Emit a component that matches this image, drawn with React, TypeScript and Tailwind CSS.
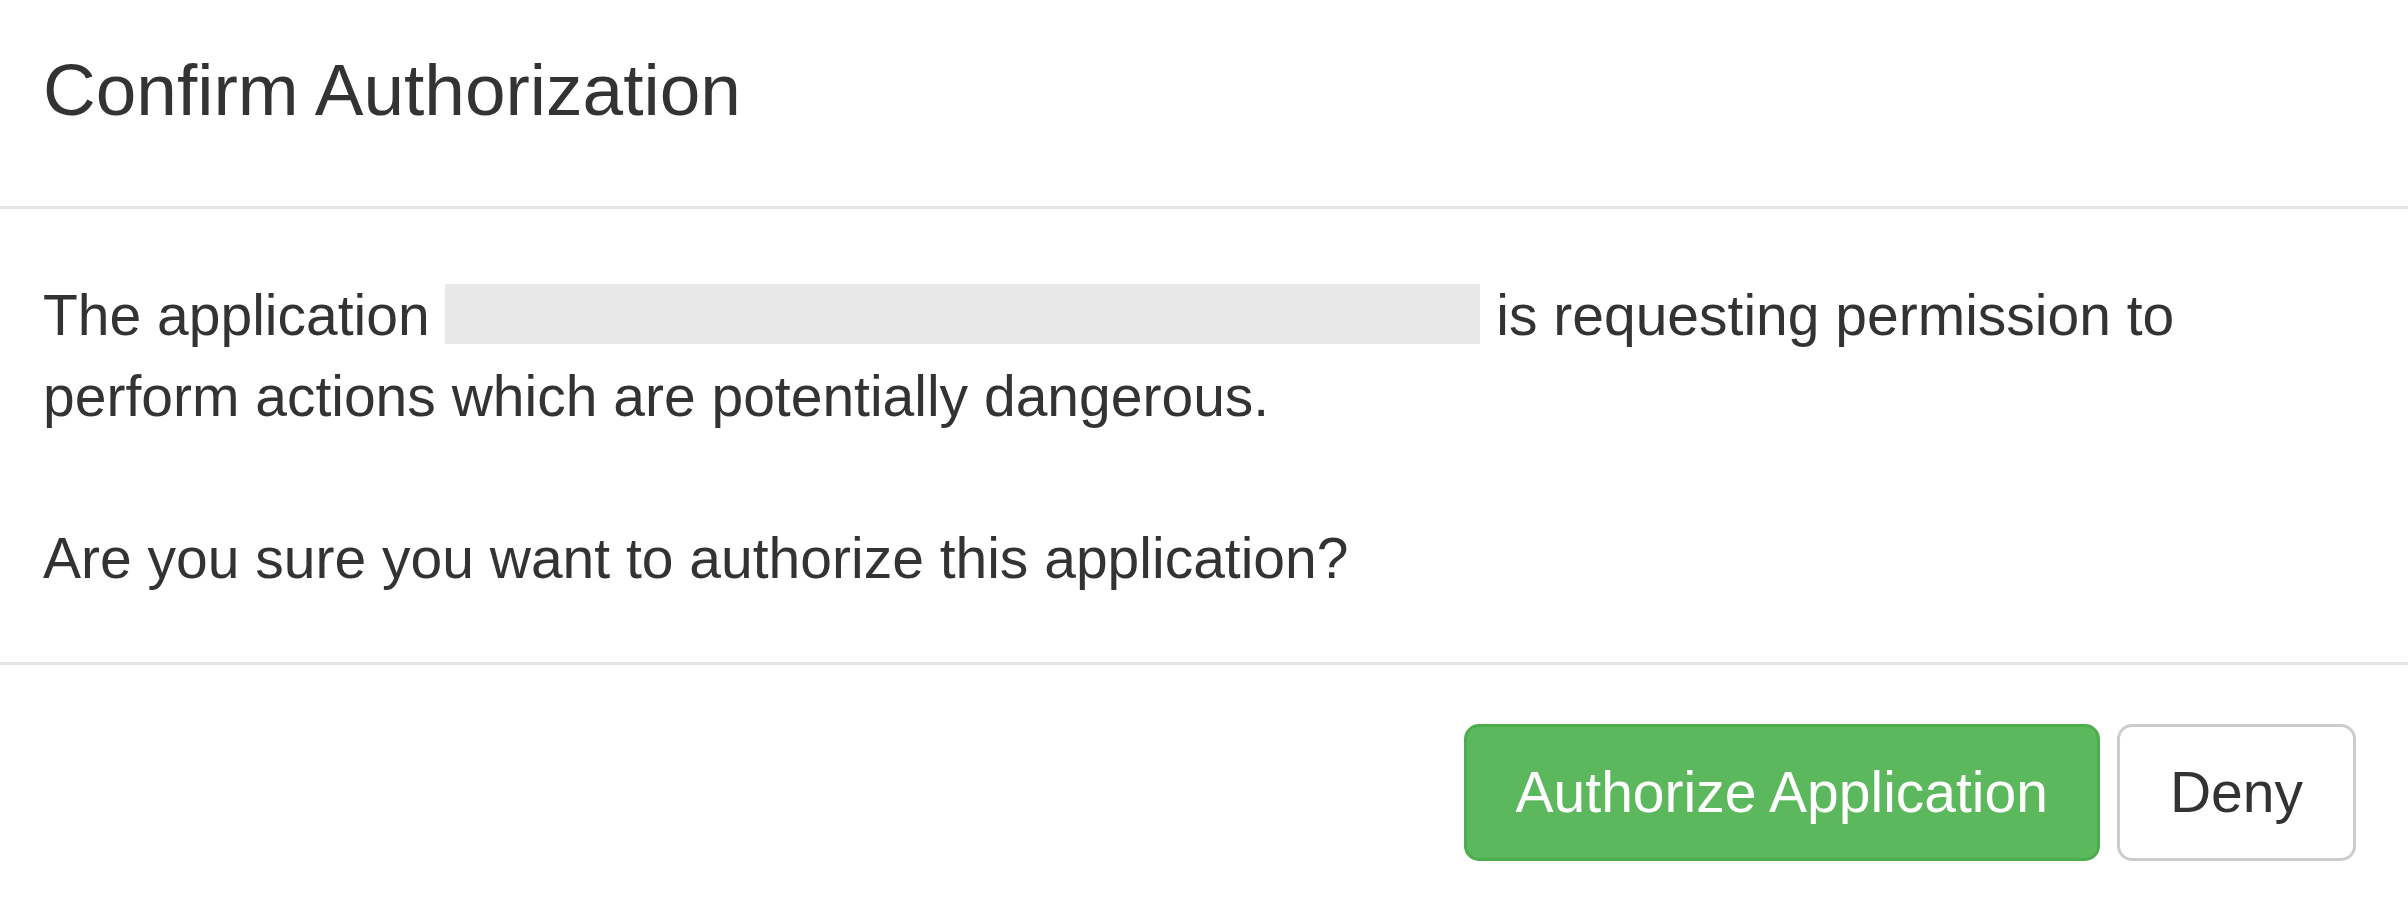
export default function App() {
  return (
    <div
      className="min-h-screen w-full bg-white text-[#333333]"
      style={{ fontFamily: '"Liberation Sans", Arial, Helvetica, sans-serif' }}
    >
      {/* header */}
      <div className="px-[43px] pt-[38px] pb-[64px] border-b-[3px] border-[#e5e5e5]">
        <h4 className="text-[73px] leading-[104px] font-normal">Confirm Authorization</h4>
      </div>

      {/* body */}
      <div className="px-[43px] pt-[66px] pb-[63px] border-b-[3px] border-[#e5e5e5]">
        <p className="text-[57px] leading-[81px]">
          The application{' '}
          <span className="inline-block w-[1035px] h-[60px] bg-[#e8e8e8] align-[-9px]" />{' '}
          is requesting permission to perform actions which are potentially dangerous.
          <br />
          <br />
          Are you sure you want to authorize this application?
        </p>
      </div>

      {/* footer */}
      <div className="flex justify-end gap-[17px] pt-[59px] pr-[52px] pb-[46px]">
        <button className="rounded-[15px] border-[3px] border-[#4cae4c] bg-[#5cb85c] px-[49px] py-[24px] text-[57px] leading-[83px] text-white">
          Authorize Application
        </button>
        <button className="rounded-[15px] border-[3px] border-[#cccccc] bg-white px-[50px] py-[24px] text-[57px] leading-[83px] text-[#333333]">
          Deny
        </button>
      </div>
    </div>
  );
}
